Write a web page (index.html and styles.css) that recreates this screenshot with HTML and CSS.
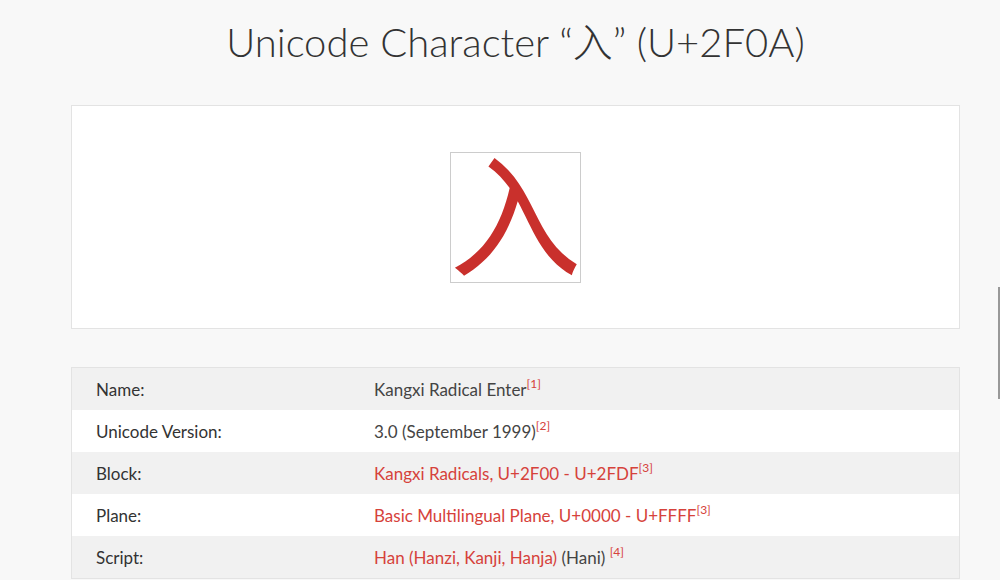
FILE: index.html
```html
<!DOCTYPE html>
<html lang="en">
<head>
    <meta charset="UTF-8">
    <title>Unicode Character “入” (U+2F0A)</title>
    <link rel="stylesheet" href="styles.css">
</head>
<body>
    <h1 class="title">Unicode Character “<span class="cjk">入</span>” (U+2F0A)</h1>

    <div class="card glyph-card">
        <div class="glyph-box"><span class="glyph">入</span></div>
    </div>

    <table class="info">
        <tr>
            <td class="label">Name:</td>
            <td>Kangxi Radical Enter<sup><a href="#">[1]</a></sup></td>
        </tr>
        <tr>
            <td class="label">Unicode Version:</td>
            <td>3.0 (September 1999)<sup><a href="#">[2]</a></sup></td>
        </tr>
        <tr>
            <td class="label">Block:</td>
            <td><a href="#">Kangxi Radicals, U+2F00 - U+2FDF</a><sup><a href="#">[3]</a></sup></td>
        </tr>
        <tr>
            <td class="label">Plane:</td>
            <td><a href="#">Basic Multilingual Plane, U+0000 - U+FFFF</a><sup><a href="#">[3]</a></sup></td>
        </tr>
        <tr>
            <td class="label">Script:</td>
            <td><a href="#">Han (Hanzi, Kanji, Hanja)</a> (Hani) <sup><a href="#">[4]</a></sup></td>
        </tr>
    </table>

    <div class="edge-bar"></div>
</body>
</html>
```

FILE: styles.css
```css
body {
    margin: 0;
    padding: 0 40px 0 71px;
    background-color: #f8f8f8;
    font-family: Lato, "Noto Sans", sans-serif;
    color: #444;
    overflow: hidden;
}
.title {
    margin: 0;
    padding: 11px 0 0;
    height: 105px;
    box-sizing: border-box;
    text-align: center;
    font-size: 40px;
    font-weight: 300;
    color: #333;
    width: 889px;
}
.cjk {
    font-family: "Noto Sans CJK SC", sans-serif;
    font-weight: 300;
}
.card {
    width: 889px;
    box-sizing: border-box;
    background-color: #fff;
    border: 1px solid #e3e3e3;
}
.glyph-card {
    height: 224px;
    display: flex;
    justify-content: center;
    align-items: center;
    margin-bottom: 38px;
}
.glyph-box {
    width: 131px;
    height: 131px;
    box-sizing: border-box;
    border: 1px solid #ccc;
    display: flex;
    justify-content: center;
    align-items: flex-start;
}
.glyph {
    display: block;
    margin-top: -10px;
    font-family: "Noto Sans CJK SC", sans-serif;
    font-size: 132px;
    line-height: 1;
    color: #c9302c;
}
.info {
    width: 889px;
    border-collapse: collapse;
    border: 1px solid #e3e3e3;
    background-color: #fff;
}
.info td {
    height: 42px;
    padding: 0 24px;
    font-size: 17px;
    color: #444;
}
.info tr:nth-child(odd) td {
    background-color: #f1f1f1;
}
.info td.label {
    width: 230px;
    color: #333;
}
a {
    color: #d6423b;
    text-decoration: none;
}
sup {
    font-size: 12px;
    vertical-align: 8px;
    line-height: 0;
}
.edge-bar {
    position: absolute;
    right: 0;
    top: 287px;
    width: 2px;
    height: 112px;
    background-color: #999;
}
```
